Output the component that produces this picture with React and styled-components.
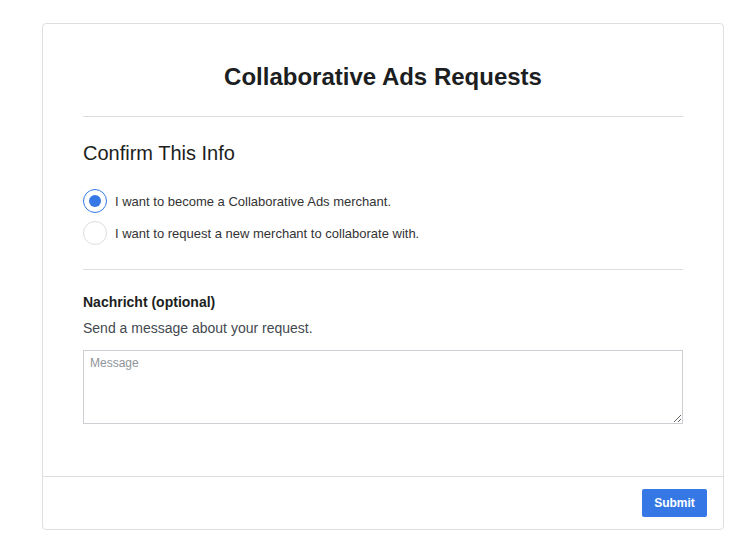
import React, { useState } from 'react'
import styled, { createGlobalStyle } from 'styled-components'

const GlobalStyle = createGlobalStyle`
  body {
    margin: 0;
    background: #fff;
    font-family: "Liberation Sans", Arial, sans-serif;
    color: #1c1e21;
  }
`;

const options = [
  { id: 'become', label: 'I want to become a Collaborative Ads merchant.' },
  { id: 'request', label: 'I want to request a new merchant to collaborate with.' },
];

const App = () => {
  const [choice, setChoice] = useState('become');

  return (
    <Page>
      <GlobalStyle />
      <Card>
        <Body>
          <Title>Collaborative Ads Requests</Title>
          <Divider />
          <Heading>Confirm This Info</Heading>
          <RadioList>
            {options.map((o) => (
              <RadioRow key={o.id} onClick={() => setChoice(o.id)}>
                <Radio $checked={choice === o.id} />
                <RadioLabel>{o.label}</RadioLabel>
              </RadioRow>
            ))}
          </RadioList>
          <Divider />
          <FieldLabel>Nachricht (optional)</FieldLabel>
          <FieldHint>Send a message about your request.</FieldHint>
          <MessageBox placeholder="Message" />
        </Body>
        <Footer>
          <SubmitButton>Submit</SubmitButton>
        </Footer>
      </Card>
    </Page>
  )
}

export default App

const Page = styled.div`
  padding: 23px 17px 0 42px;
`;

const Card = styled.div`
  width: 682px;
  box-sizing: border-box;
  border: 1px solid #dddfe2;
  border-radius: 4px;
  background: #fff;
`;

const Body = styled.div`
  padding: 39px 40px 52px;
  display: flex;
  flex-direction: column;
`;

const Title = styled.h1`
  margin: 0 0 25px;
  font-size: 24px;
  line-height: 28px;
  font-weight: bold;
  text-align: center;
  color: #1c1e21;
`;

const Divider = styled.div`
  height: 1px;
  background: #dadde1;
`;

const Heading = styled.h2`
  margin: 24px 0 24px;
  font-size: 20px;
  line-height: 24px;
  font-weight: normal;
  color: #1c1e21;
`;

const RadioList = styled.div`
  display: flex;
  flex-direction: column;
  gap: 8px;
  margin-bottom: 24px;
`;

const RadioRow = styled.label`
  display: flex;
  align-items: center;
  gap: 8px;
  cursor: pointer;
`;

const Radio = styled.span`
  width: 22px;
  height: 22px;
  border-radius: 50%;
  border: 1px solid ${(p) => (p.$checked ? '#3578e5' : '#dadde1')};
  display: grid;
  place-items: center;
  flex-shrink: 0;
  &::after {
    content: '';
    width: 12px;
    height: 12px;
    border-radius: 50%;
    background: ${(p) => (p.$checked ? '#3578e5' : 'transparent')};
  }
`;

const RadioLabel = styled.span`
  font-size: 13px;
  color: #333;
`;

const FieldLabel = styled.div`
  margin-top: 24px;
  font-size: 14px;
  line-height: 17px;
  font-weight: bold;
  color: #1c1e21;
`;

const FieldHint = styled.div`
  margin-top: 8px;
  font-size: 14px;
  line-height: 18px;
  color: #444950;
`;

const MessageBox = styled.textarea`
  margin-top: 13px;
  height: 74px;
  box-sizing: border-box;
  padding: 5px 6px;
  border: 1px solid #ccd0d5;
  border-radius: 0;
  font-family: "Liberation Sans", Arial, sans-serif;
  font-size: 12px;
  color: #1c1e21;
  outline: none;
  &::placeholder {
    color: #90949c;
  }
`;

const Footer = styled.div`
  border-top: 1px solid #dddfe2;
  padding: 12px 16px 12px;
  display: flex;
  justify-content: flex-end;
`;

const SubmitButton = styled.button`
  width: 65px;
  height: 28px;
  border: none;
  border-radius: 2px;
  background: #3578e5;
  color: #fff;
  font-family: "Liberation Sans", Arial, sans-serif;
  font-size: 12px;
  font-weight: bold;
  cursor: pointer;
`;
